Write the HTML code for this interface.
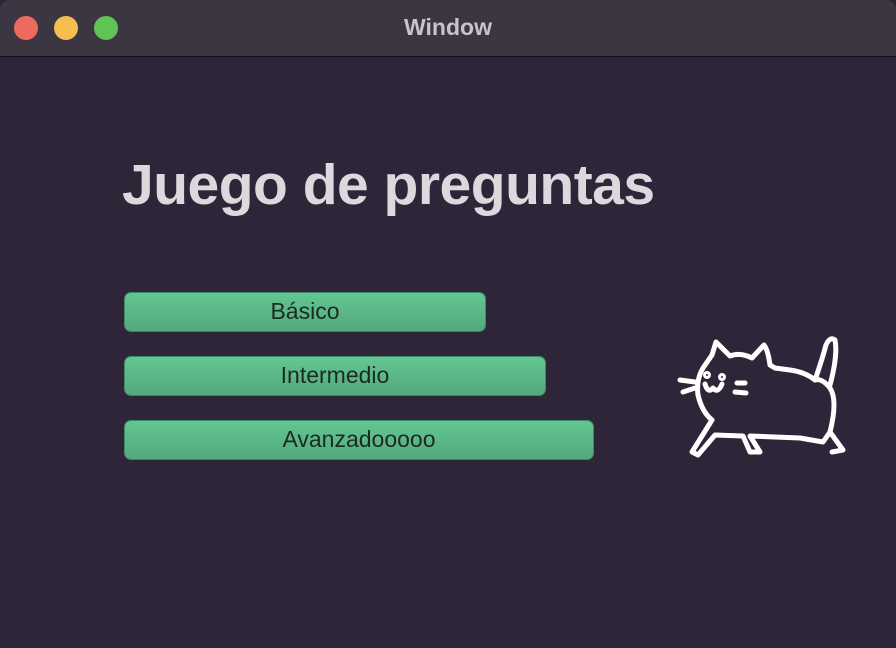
<!DOCTYPE html>
<html><head><style>
body{margin:0;width:896px;height:648px;background:#2e2638;overflow:hidden;font-family:"Liberation Sans",sans-serif}
.tb{position:absolute;left:0;top:0;width:896px;height:56px;background:#3c3643;border-bottom:1px solid #141018;border-radius:10px 10px 0 0}
.tb .t{position:absolute;left:0;right:0;top:14px;text-align:center;color:#c8c4cc;font-weight:bold;font-size:23px}
.d{position:absolute;top:16px;width:24px;height:24px;border-radius:50%}
h1{position:absolute;left:122px;top:152px;margin:0;font-size:57px;color:#dcd9de;font-weight:bold;letter-spacing:-0.5px}
.b{position:absolute;left:124px;height:40px;border-radius:7px;background:linear-gradient(#63c791,#53a87d);border:1px solid #3e8a62;box-sizing:border-box;color:#1c2a22;font-size:23px;text-align:center;line-height:37px}
</style></head><body>
<div class="tb"><div class="d" style="left:14px;background:#ee6a5e"></div><div class="d" style="left:54px;background:#f5be4f"></div><div class="d" style="left:94px;background:#5ec453"></div><div class="t">Window</div></div>
<h1>Juego de preguntas</h1>
<div class="b" style="top:292px;width:362px">Básico</div>
<div class="b" style="top:356px;width:422px">Intermedio</div>
<div class="b" style="top:420px;width:470px">Avanzadooooo</div>
<svg style="position:absolute;left:0;top:0" width="896" height="648" fill="none" stroke="#fff" stroke-width="5" stroke-linecap="round" stroke-linejoin="round">
<path d="M703 368 Q696 380 698 395 Q702 412 712 420 L692 452 L698 455 L715 435 L743 436 L750 452 L760 452 L750 436 L800 438 L823 442 L830 432 Q838 400 830 388 Q822 378 815 380 Q805 372 790 370 L775 368 L770 365 Q768 350 764 345 L752 358 Q740 352 730 356 L716 342 L712 355 Z"/>
<path d="M815 380 Q822 360 826 345 Q830 336 835 340 Q838 355 830 385"/>
<path d="M830 432 L843 450 L832 452"/>
<path d="M680 380 L695 382 M683 392 L695 388 M737 383 L745 383 M735 392 L746 393"/>
<path d="M705 384 Q708 394 713 388 Q718 394 722 384"/>
<circle cx="707" cy="375" r="1.5"/><circle cx="722" cy="377" r="1.5"/>
</svg>
</body></html>
